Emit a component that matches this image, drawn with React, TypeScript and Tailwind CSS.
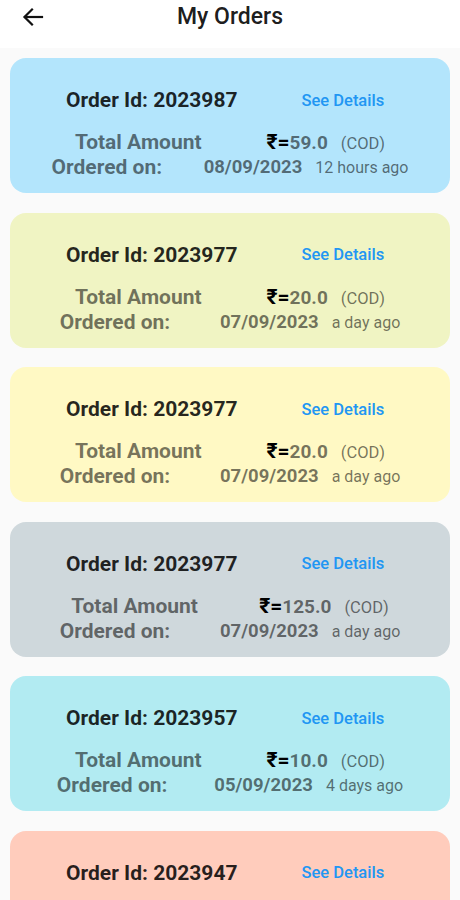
import React from "react";

type Order = {
  id: string;
  amount: string;
  date: string;
  ago: string;
  bg: string;
};

const orders: Order[] = [
  { id: "2023987", amount: "59.0", date: "08/09/2023", ago: "12 hours ago", bg: "bg-[#b3e5fc]" },
  { id: "2023977", amount: "20.0", date: "07/09/2023", ago: "a day ago", bg: "bg-[#f0f4c3]" },
  { id: "2023977", amount: "20.0", date: "07/09/2023", ago: "a day ago", bg: "bg-[#fff9c4]" },
  { id: "2023977", amount: "125.0", date: "07/09/2023", ago: "a day ago", bg: "bg-[#cfd8dc]" },
  { id: "2023957", amount: "10.0", date: "05/09/2023", ago: "4 days ago", bg: "bg-[#b2ebf2]" },
  { id: "2023947", amount: "10.0", date: "04/09/2023", ago: "5 days ago", bg: "bg-[#ffccbc]" },
];

function Card({ o }: { o: Order }) {
  return (
    <div className={`${o.bg} rounded-2xl h-[135px] shrink-0 flex flex-col pt-[31px]`}>
      <div className="flex items-center pl-[56px] gap-[64px] h-[24px]">
        <span className="text-[21px] font-bold text-black/85 whitespace-nowrap">Order Id: {o.id}</span>
        <span className="text-[16.5px] font-medium text-[#2196f3] whitespace-nowrap">See Details</span>
      </div>
      <div className="flex justify-evenly items-center mt-[18px] h-[24px]">
        <span className="text-[21px] font-bold text-black/55 whitespace-nowrap">Total Amount</span>
        <span className="flex items-baseline whitespace-nowrap">
          <span className="text-[21px] font-bold text-black">₹=</span>
          <span className="text-[19px] font-bold text-black/55">{o.amount}</span>
          <span className="text-[16.5px] text-black/55 ml-[13px]">(COD)</span>
        </span>
      </div>
      <div className="flex justify-evenly items-center h-[26px]">
        <span className="text-[21px] font-bold text-black/55 whitespace-nowrap">Ordered on:</span>
        <span className="flex items-baseline whitespace-nowrap">
          <span className="text-[18.5px] font-bold text-black/55">{o.date}</span>
          <span className="text-[16px] text-black/55 ml-[13px]">{o.ago}</span>
        </span>
      </div>
    </div>
  );
}

export default function App() {
  return (
    <div
      className="w-[460px] h-[900px] overflow-hidden bg-[#fafafa] flex flex-col"
      style={{ fontFamily: "Roboto, 'Noto Sans', sans-serif" }}
    >
      <div className="h-[48px] bg-white flex items-center relative shrink-0">
        <svg
          className="absolute left-[22px] top-[7px]"
          width="22"
          height="20"
          viewBox="0 0 22 20"
          fill="none"
          stroke="#111"
          strokeWidth="2.2"
          strokeLinecap="square"
        >
          <path d="M20 10H3" />
          <path d="M10 2.5L2.5 10L10 17.5" />
        </svg>
        <div className="w-full text-center text-[23px] font-medium text-black/90 -mt-[14px]">My Orders</div>
      </div>
      <div className="flex flex-col gap-[19.5px] px-[10px] pt-[10px]">
        {orders.map((o, i) => (
          <Card key={i} o={o} />
        ))}
      </div>
    </div>
  );
}
